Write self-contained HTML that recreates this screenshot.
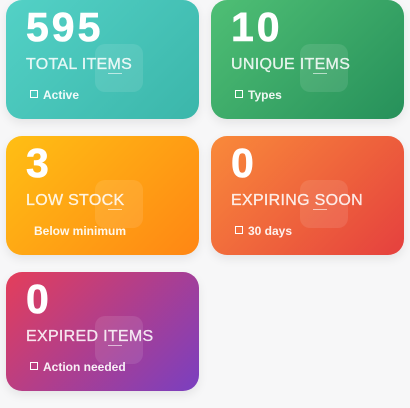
<!DOCTYPE html>
<html><head><style>
body{margin:0;width:410px;height:408px;background:#f7f7f8;font-family:"Liberation Sans",sans-serif;position:relative;overflow:hidden}
.c{position:absolute;width:193px;height:119px;border-radius:16px;color:#fff;box-shadow:0 4px 10px rgba(0,0,0,.08);overflow:hidden}
.n{position:absolute;left:20px;top:5px;font-size:41px;font-weight:bold;line-height:44px;letter-spacing:3px;-webkit-text-stroke:0.6px #fff}
.l{position:absolute;left:20px;top:56px;font-size:16px;color:rgba(255,255,255,.85);letter-spacing:.3px;-webkit-text-stroke:0.3px rgba(255,255,255,.85)}
.s{position:absolute;left:24px;top:88px;font-size:12px;font-weight:bold;color:rgba(255,255,255,.92)}
.s i{display:inline-block;width:6px;height:6px;border:1px solid #fff;margin-right:5px;vertical-align:1px}
.ib{position:absolute;left:89px;top:44px;width:48px;height:48px;border-radius:10px;background:rgba(255,255,255,.1)}
.ib:after{content:"";position:absolute;left:13px;top:16px;width:14px;height:13px;border-bottom:1px solid rgba(255,255,255,.6)}
</style></head><body>
<div class="c" style="left:6px;top:0;background:linear-gradient(135deg,#53d1c6,#3bb6aa)"><div class="n">595</div><div class="l">TOTAL ITEMS</div><div class="ib"></div><div class="s"><i></i>Active</div></div>
<div class="c" style="left:211px;top:0;background:linear-gradient(135deg,#4fbf75,#26905a)"><div class="n">10</div><div class="l">UNIQUE ITEMS</div><div class="ib"></div><div class="s"><i></i>Types</div></div>
<div class="c" style="left:6px;top:136px;background:linear-gradient(135deg,#ffbf14,#ff8614)"><div class="n">3</div><div class="l">LOW STOCK</div><div class="ib"></div><div class="s" style="left:28px">Below minimum</div></div>
<div class="c" style="left:211px;top:136px;background:linear-gradient(135deg,#f98a3a,#e5403e)"><div class="n">0</div><div class="l">EXPIRING SOON</div><div class="ib"></div><div class="s"><i></i>30 days</div></div>
<div class="c" style="left:6px;top:272px;background:linear-gradient(135deg,#e43e5a,#7a3fc0)"><div class="n">0</div><div class="l">EXPIRED ITEMS</div><div class="ib"></div><div class="s"><i></i>Action needed</div></div>
</body></html>
